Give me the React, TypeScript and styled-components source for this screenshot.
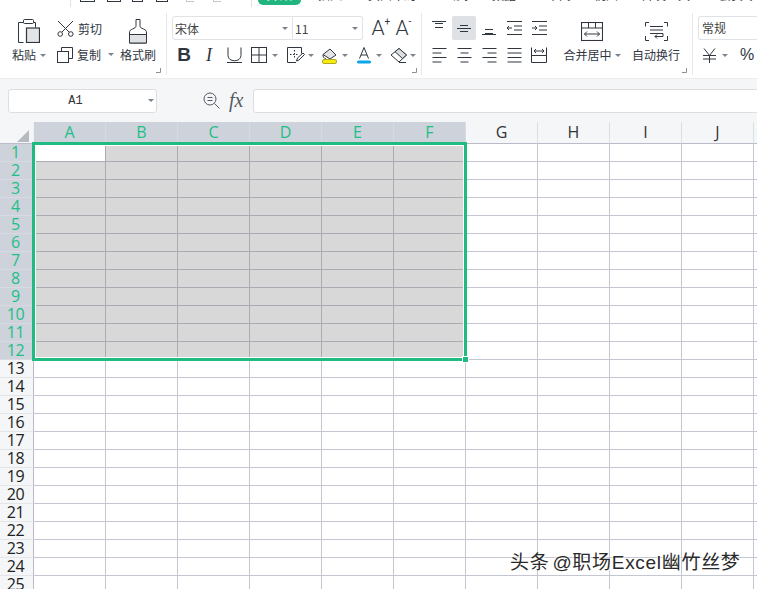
import React from "react";
import styled, { createGlobalStyle } from "styled-components";

const Global = createGlobalStyle`
  html, body { margin: 0; padding: 0; background: #fff; }
  * { box-sizing: border-box; }
`;

const CJK = `"Noto Sans CJK SC", "Noto Sans", sans-serif`;
const INK = "#30363f";

const Page = styled.div`
  width: 757px; height: 589px; overflow: hidden; position: relative; background: #fff;
  font-family: ${CJK}; color: ${INK};
`;

/* ---- clipped tab strip ---- */
const Strip = styled.div`
  height: 7px; display: flex; overflow: hidden; position: relative; background: #fff;
`;
const StripSep = styled.div<{ $ml: number }>`
  width: 1px; height: 7px; background: #dfe1e5; margin-left: ${p => p.$ml}px; flex: none;
`;
const QuickIcon = styled.div<{ $ml: number; $w: number }>`
  flex: none; width: ${p => p.$w}px; height: 2px; margin-left: ${p => p.$ml}px;
  border: 1px solid ${INK}; border-top: none;
`;
const QuickFaint = styled(QuickIcon)`
  border-color: #c5c7cb; border-width: 0 0 1px 1px;
`;
const Pill = styled.div`
  flex: none; margin-left: 6px; width: 43px; height: 5px; background: #20b57f;
  border-radius: 0 0 12px 12px; overflow: hidden; color: #fff; font-size: 13px;
  line-height: 18px; text-align: center;
  span { display: block; margin-top: -15px; }
`;
const TabText = styled.div<{ $ml: number }>`
  flex: none; margin-left: ${p => p.$ml}px; font-size: 12px; line-height: 16px;
  margin-top: -13px; color: #333; white-space: nowrap;
`;

/* ---- ribbon ---- */
const Ribbon = styled.div`
  height: 71px; display: flex; background: #fff; position: relative;
`;
const Group = styled.div<{ $w: number; $pl?: number }>`
  flex: none; width: ${p => p.$w}px; padding-left: ${p => p.$pl ?? 0}px; height: 100%;
  position: relative; display: flex;
`;
const GroupLine = styled.div`
  flex: none; width: 1px; height: 62px; margin-top: 6px; background: #e6e7ea;
`;
const Corner = styled.svg<{ $r: number }>`
  position: absolute; right: ${p => p.$r}px; bottom: 5px; width: 5px; height: 5px;
`;
const Arrow = styled.i<{ $ml?: number }>`
  display: inline-block; flex: none; width: 0; height: 0; margin-left: ${p => p.$ml ?? 3}px;
  border-left: 3px solid transparent; border-right: 3px solid transparent; border-top: 3px solid #7d828c;
`;
const BigTool = styled.div<{ $w: number; $ml?: number }>`
  flex: none; width: ${p => p.$w}px; margin-left: ${p => p.$ml ?? 0}px; display: flex; flex-direction: column;
  align-items: center;
`;
const BigIcon = styled.div<{ $pt?: number }>`
  height: 36px; padding-top: ${p => p.$pt ?? 12}px; display: flex; justify-content: center; align-items: flex-start;
`;
const Label = styled.div`
  margin-top: 3px; height: 18px; display: flex; align-items: center; font-size: 12px; line-height: 18px;
  white-space: nowrap; color: ${INK};
`;
const SmallStack = styled.div<{ $ml: number }>`
  flex: none; margin-left: ${p => p.$ml}px; display: flex; flex-direction: column; padding-top: 13px; gap: 9px;
`;
const SmallTool = styled.div`
  display: flex; align-items: center; gap: 4px; height: 17px; font-size: 12px; white-space: nowrap;
`;
const FontColumn = styled.div`
  flex: none; display: flex; flex-direction: column; padding-top: 9px;
`;
const Row = styled.div<{ $mt?: number }>`
  display: flex; align-items: center; margin-top: ${p => p.$mt ?? 0}px;
`;
const Combo = styled.div<{ $w: number }>`
  flex: none; width: ${p => p.$w}px; height: 24px; border: 1px solid #e0e2e6; display: flex; align-items: center;
  justify-content: space-between; padding: 0 4px 0 2px; font-size: 12px; background: #fff; color: #444;
  &:first-child { border-radius: 3px 0 0 3px; }
  & + & { border-left: none; border-radius: 0 3px 3px 0; }
`;
const Slot = styled.div<{ $w: number; $ml?: number }>`
  flex: none; width: ${p => p.$w}px; margin-left: ${p => p.$ml ?? 0}px; height: 24px; display: flex;
  align-items: center; justify-content: center;
`;
const IconDrop = styled.div<{ $ml: number }>`
  flex: none; margin-left: ${p => p.$ml}px; height: 24px; display: flex; align-items: center;
`;
const BoldB = styled.span`
  font: 700 19px "Liberation Sans", sans-serif; color: ${INK};
`;
const ItalicI = styled.span`
  font: italic 400 18px "Liberation Serif", serif; color: ${INK};
`;
const GrowA = styled.span`
  font: 300 21px Roboto, sans-serif; color: ${INK}; position: relative;
  sup { position: absolute; left: 100%; top: 1px; font-size: 10px; line-height: 10px; font-weight: 400; }
`;
const AlignCell = styled.div<{ $on?: boolean }>`
  flex: none; width: 24px; height: 24px; margin-right: 1px; border-radius: 2px; display: flex; align-items: center;
  justify-content: center; background: ${p => (p.$on ? "#dee1e5" : "transparent")};
`;
const NumBox = styled.div`
  width: 70px; height: 24px; border: 1px solid #e0e2e6; border-radius: 3px 0 0 3px; border-right: none;
  font-size: 12px; line-height: 22px; padding-left: 3px; color: #444;
`;
const Percent = styled.span`
  font: 400 16px "Liberation Sans", sans-serif; color: ${INK}; margin-left: 10px;
`;

/* ---- formula bar ---- */
const FormulaBar = styled.div`
  height: 44px; background: #f5f6f8; display: flex; align-items: center; padding: 0 0 0 8px;
  border-top: 1px solid #eceded;
`;
const NameBox = styled.div`
  flex: none; width: 149px; height: 24px; background: #fff; border: 1px solid #dcdee2; border-radius: 3px;
  display: flex; align-items: center; padding-right: 2px;
  span { flex: 1; text-align: center; font: 400 12px "Liberation Mono", monospace; color: #333; padding-right: 3px; }
`;
const Fx = styled.span`
  font: italic 400 20px "Liberation Serif", serif; color: #555a66; margin-left: 9px; width: 19px; flex: none;
`;
const FormulaInput = styled.div`
  flex: none; margin-left: 5px; width: 520px; height: 24px; background: #fff; border: 1px solid #dcdee2; border-radius: 3px 0 0 3px;
`;

/* ---- sheet ---- */
const Sheet = styled.div`
  position: relative; width: 900px;
`;
const HeaderRow = styled.div`
  height: 22px; display: flex;
`;
const Corners = styled.div`
  flex: none; width: 34px; height: 22px; background: #f5f6f8; border-right: 1px solid #eff0f3; border-bottom: 1px solid #b9bcc8;
  display: flex; justify-content: flex-end; align-items: flex-end; padding: 0 4px 1px 0;
`;
const ColHead = styled.div<{ $sel: boolean }>`
  flex: none; width: 72px; height: 22px; text-align: center; font: 400 16px/20px "Open Sans", sans-serif;
  background: ${p => (p.$sel ? "#cdd2db" : "#f5f6f8")}; color: ${p => (p.$sel ? "#1dbf88" : "#333")};
  border-right: 1px solid ${p => (p.$sel ? "#d6dae2" : "#dcdee5")};
  border-bottom: 1px solid ${p => (p.$sel ? "#cdd2db" : "#b9bcc8")};
`;
const GridRow = styled.div`
  height: 18px; display: flex;
`;
const RowHead = styled.div<{ $sel: boolean }>`
  flex: none; width: 34px; height: 18px; padding-right: 2px; text-align: center; font: 400 16px/16px "Open Sans", sans-serif;
  letter-spacing: -0.3px;
  background: ${p => (p.$sel ? "#cdd2db" : "#f5f6f8")}; color: ${p => (p.$sel ? "#1dbf88" : "#222")};
  border-right: 1px solid ${p => (p.$sel ? "#cdd2db" : "#b9bcc8")};
  border-bottom: 1px solid ${p => (p.$sel ? "#d6dae2" : "#e3e5ea")};
`;
const Cell = styled.div<{ $mode: "plain" | "sel" | "active" }>`
  flex: none; width: 72px; height: 18px;
  background: ${p => (p.$mode === "sel" ? "#d8d8d8" : "#fff")};
  border-right: 1px solid ${p => (p.$mode === "plain" ? "#c4c7d2" : "#a9acb3")};
  border-bottom: 1px solid ${p => (p.$mode === "plain" ? "#c4c7d2" : "#a9acb3")};
`;
const Selection = styled.div`
  position: absolute; left: 32px; top: 20px; width: 435px; height: 219px;
  border: 3px solid #1fbb80; box-shadow: inset 0 0 0 1px #fff; pointer-events: none;
`;
const Handle = styled.div`
  position: absolute; left: 463px; top: 235px; width: 5px; height: 5px; background: #1fbb80;
  box-shadow: 0 0 0 1px #fff;
`;
const Watermark = styled.div`
  position: absolute; left: 510px; top: 550px; font-family: "Liberation Sans", ${CJK}; font-size: 19px; line-height: 26px;
  letter-spacing: 0.7px; word-spacing: -3px; color: #2a2a2a;
  white-space: nowrap; text-shadow: 1px 1px 1px rgba(255,255,255,.9), -1px -1px 1px rgba(255,255,255,.7);
`;

/* ---- icons ---- */
const S: React.FC<{ w: number; h: number; children: React.ReactNode }> = ({ w, h, children }) => (
  <svg width={w} height={h} viewBox={`0 0 ${w} ${h}`} fill="none" stroke={INK} strokeWidth={1} style={{ display: "block", flex: "none" }}>
    {children}
  </svg>
);
const PasteIcon = () => (
  <S w={22} h={24}>
    <path d="M5.5 23.5H.5V3.5h5M15.5 3.5h2v5" />
    <rect x="5.5" y=".5" width="10" height="4" rx="1" fill="#fff" />
    <rect x="8.5" y="9" width="13" height="14.5" fill="#e3e4e6" strokeWidth={1.2} />
  </S>
);
const CutIcon = () => (
  <S w={17} h={17}>
    <path d="M1 1l11 11M16 1L5 12" />
    <circle cx="3.2" cy="14" r="2.3" /><circle cx="13.8" cy="14" r="2.3" />
  </S>
);
const CopyIcon = () => (
  <S w={16} h={16}>
    <path d="M4.5 4V.5h11v11H12" />
    <rect x=".5" y="4.5" width="11" height="11" />
  </S>
);
const BrushIcon = () => (
  <S w={18} h={25}>
    <path d="M7 .5h4v6c0 2 1 2.500 3.500 3.500 2 .8 3 1.500 3 4v10H.5v-10c0-2.500 1-3.200 3-4C6 9 7 8.500 7 6.500z" />
    <path d="M.5 15.500h17v8.500H.5z" fill="#e0e1e4" />
  </S>
);
const BorderIcon = () => (
  <S w={16} h={16}><rect x=".5" y=".5" width="15" height="15" /><path d="M8 .5v15M.5 8h15" /></S>
);
const DashBorderIcon = () => (
  <S w={18} h={16}>
    <path d="M9 15.500H.5V.5h14v6" />
    <path d="M7.500 3v9M3 7.500h9" strokeDasharray="1.500 1.500" />
    <path d="M9.500 14l1-3 5.500-5 1.500 1.500-5.500 5.500z" />
  </S>
);
const FillIcon = () => (
  <svg width="16" height="17" viewBox="0 0 16 17" fill="none" stroke={INK} style={{ display: "block", flex: "none" }}>
    <path d="M1 7.500L8 2l6 6-6 4z" fill="#e4e5e7" />
    <path d="M1 7.500c-.5 2 1 4 3 4.500" />
    <rect x=".5" y="12.500" width="14" height="4" rx="1.500" fill="#f6ec10" stroke="#b0a820" />
  </svg>
);
const FontColorIcon = () => (
  <svg width="14" height="18" viewBox="0 0 14 18" fill="none" style={{ display: "block", flex: "none" }}>
    <path d="M2.500 12.500L7 1.500l4.500 11M4 9h6" stroke={INK} />
    <rect x="0" y="14.500" width="14" height="3" rx="1.500" fill="#0ba5e8" />
  </svg>
);
const EraserIcon = () => (
  <S w={18} h={15}>
    <path d="M1 7l8-6.500 7.500 6.500L9 14z" />
    <path d="M5 3.700L12.500 10.500L16.500 7L9 .5z" fill="#dcdde0" />
    <path d="M9 14.500h7" />
  </S>
);
type AL = "top" | "mid" | "bot";
const VAlign: React.FC<{ v: AL }> = ({ v }) => {
  const y = v === "top" ? [2, 6] : v === "mid" ? [5, 9] : [8, 12];
  return (
    <S w={16} h={14}>
      {v === "top" && <path d="M1 .5h14" />}
      {v === "bot" && <path d="M1 13.500h14" />}
      {v === "mid" && <path d="M1 7.500h14" />}
      <path d={`M4 ${y[0] + .5 - (v === "mid" ? 1 : 0)}h8`} />
      <path d={`M4 ${y[1] + .5 + (v === "mid" ? 1 : 0)}h8`} />
    </S>
  );
};
const Indent: React.FC<{ out?: boolean }> = ({ out }) => (
  <S w={16} h={14}>
    <path d="M1 .5h15M1 13.500h15M8 5h8M8 9h8" />
    {out ? <path d="M6 7H1M3 5L1 7l2 2" /> : <path d="M1 7h5M4 5l2 2-2 2" />}
  </S>
);
const HAlign: React.FC<{ k: "l" | "c" | "r" | "j" }> = ({ k }) => {
  const d = k === "l" ? "M.5 1.500h14M.5 6h9M.5 10.500h14M.5 15h9" : undefined;
  const e = k === "c" ? "M.5 1.500h14M3.500 6h8M.5 10.500h14M3.500 15h8" : undefined;
  const f = k === "r" ? "M.5 1.500h14M5.500 6h9M.5 10.500h14M5.500 15h9" : undefined;
  const g = k === "j" ? "M.5 1.500h14M.5 6h14M.5 10.500h14M.5 15h14" : undefined;
  return <S w={15} h={16}><path d={d ?? e ?? f ?? g} strokeWidth={1.1} /></S>;
};
const Distribute = () => (
  <S w={16} h={16}>
    <path d="M.5 .5v15M15.500 .5v15M.5 15.500h15M.5 8.500h15" />
    <path d="M3 4h10M5 2L3 4l2 2M11 2l2 2-2 2" />
  </S>
);
const MergeIcon = () => (
  <S w={22} h={19}>
    <rect x=".5" y=".5" width="21" height="18" strokeWidth={1.1} />
    <path d="M.5 6h21M7.500 .5V6M14.500 .5V6" />
    <path d="M3.500 12h15M6 9.500L3.500 12 6 14.500M16 9.500l2.500 2.500-2.500 2.500" />
  </S>
);
const WrapIcon = () => (
  <S w={23} h={19}>
    <path d="M4 .5H.5v4M19 .5h3.500v4M.5 14v4.500H4M22.500 14v4.500H19" />
    <path d="M5 4.500h13M5 8h13M5 11.500h13v3h-8M12 12.500l-2 2 2 2" />
  </S>
);
const ZoomIcon = () => (
  <svg width="17" height="17" viewBox="0 0 17 17" fill="none" stroke="#555a66" style={{ display: "block", flex: "none" }}>
    <circle cx="7" cy="7" r="6" /><path d="M11.500 11.500l5 5M4.500 5.500h5M4.500 8.500h5" />
  </svg>
);
const CornerMark = ({ r }: { r: number }) => (
  <Corner $r={r} viewBox="0 0 5 5" fill="none" stroke="#8c9099"><path d="M4.500 0v4.500H0" /></Corner>
);

const cols = ["A", "B", "C", "D", "E", "F", "G", "H", "I", "J", ""];
const rows = Array.from({ length: 25 }, (_, i) => i + 1);

export default function App() {
  return (
    <Page>
      <Global />
      <Strip>
        <StripSep $ml={70} />
        <QuickIcon $ml={9} $w={15} />
        <QuickIcon $ml={12} $w={14} />
        <QuickIcon $ml={11} $w={11} />
        <QuickIcon $ml={13} $w={12} />
        <QuickFaint $ml={18} $w={8} />
        <QuickFaint $ml={19} $w={8} />
        <StripSep $ml={30} />
        <Pill><span>开始</span></Pill>
        <TabText $ml={17}>插入</TabText>
        <TabText $ml={26}>页面布局</TabText>
        <TabText $ml={28}>公式</TabText>
        <TabText $ml={24}>数据</TabText>
        <TabText $ml={31}>审阅</TabText>
        <TabText $ml={23}>视图</TabText>
        <TabText $ml={24}>开发工具</TabText>
        <TabText $ml={29}>会员专享</TabText>
      </Strip>
      <Ribbon>
        <Group $w={166}>
          <BigTool $w={34} $ml={12}>
            <BigIcon><PasteIcon /></BigIcon>
            <Label>粘贴<Arrow $ml={4} /></Label>
          </BigTool>
          <SmallStack $ml={11}>
            <SmallTool><CutIcon />剪切</SmallTool>
            <SmallTool><CopyIcon />复制<Arrow /></SmallTool>
          </SmallStack>
          <BigTool $w={40} $ml={4}>
            <BigIcon><BrushIcon /></BigIcon>
            <Label>格式刷</Label>
          </BigTool>
          <CornerMark r={5} />
        </Group>
        <GroupLine />
        <Group $w={254} $pl={5}>
          <FontColumn>
            <Row>
              <Combo $w={121}>宋体<Arrow /></Combo>
              <Combo $w={70}>11<Arrow /></Combo>
              <Slot $w={24} $ml={3}><GrowA>A<sup>+</sup></GrowA></Slot>
              <Slot $w={24}><GrowA>A<sup>-</sup></GrowA></Slot>
            </Row>
            <Row $mt={3}>
              <Slot $w={24}><BoldB>B</BoldB></Slot>
              <Slot $w={24} $ml={1}><ItalicI>I</ItalicI></Slot>
              <Slot $w={24} $ml={1}>
                <S w={15} h={16}><path d="M1 .5v8c0 7 13 7 13 0v-8M0 15.500h15" /></S>
              </Slot>
              <IconDrop $ml={5}><BorderIcon /><Arrow $ml={5} /></IconDrop>
              <IconDrop $ml={9}><DashBorderIcon /><Arrow $ml={3} /></IconDrop>
              <IconDrop $ml={8}><FillIcon /><Arrow $ml={4} /></IconDrop>
              <IconDrop $ml={9}><FontColorIcon /><Arrow $ml={5} /></IconDrop>
              <IconDrop $ml={8}><EraserIcon /><Arrow $ml={2} /></IconDrop>
            </Row>
          </FontColumn>
          <CornerMark r={4} />
        </Group>
        <GroupLine />
        <Group $w={270} $pl={5}>
          <FontColumn>
            <Row>
              <AlignCell><VAlign v="top" /></AlignCell>
              <AlignCell $on><VAlign v="mid" /></AlignCell>
              <AlignCell><VAlign v="bot" /></AlignCell>
              <AlignCell><Indent out /></AlignCell>
              <AlignCell><Indent /></AlignCell>
            </Row>
            <Row $mt={3}>
              <AlignCell><HAlign k="l" /></AlignCell>
              <AlignCell><HAlign k="c" /></AlignCell>
              <AlignCell><HAlign k="r" /></AlignCell>
              <AlignCell><HAlign k="j" /></AlignCell>
              <AlignCell><Distribute /></AlignCell>
            </Row>
          </FontColumn>
          <BigTool $w={64} $ml={8}>
            <BigIcon $pt={15}><MergeIcon /></BigIcon>
            <Label>合并居中<Arrow /></Label>
          </BigTool>
          <BigTool $w={52} $ml={6}>
            <BigIcon $pt={15}><WrapIcon /></BigIcon>
            <Label>自动换行</Label>
          </BigTool>
          <CornerMark r={5} />
        </Group>
        <GroupLine />
        <Group $w={70} $pl={5}>
          <FontColumn>
            <NumBox>常规</NumBox>
            <Row $mt={3}>
              <Slot $w={30} $ml={2}>
                <S w={15} h={15}><path d="M2 .5l5.500 7 5.500-7M1 7.500h13M1 11h13M7.500 7.500v7.500" /></S>
                <Arrow $ml={5} />
              </Slot>
              <Percent>%</Percent>
            </Row>
          </FontColumn>
        </Group>
      </Ribbon>
      <FormulaBar>
        <NameBox>
          <span>A1</span>
          <Arrow />
        </NameBox>
        <Slot $w={17} $ml={46}><ZoomIcon /></Slot>
        <Fx>fx</Fx>
        <FormulaInput />
      </FormulaBar>
      <Sheet>
        <HeaderRow>
          <Corners>
            <svg width="12" height="12" viewBox="0 0 12 12" style={{ display: "block" }}><path d="M12 0v12H0z" fill="#b7babf" /></svg>
          </Corners>
          {cols.map((c, i) => <ColHead key={i} $sel={i < 6}>{c}</ColHead>)}
        </HeaderRow>
        {rows.map(r => (
          <GridRow key={r}>
            <RowHead $sel={r <= 12}>{r}</RowHead>
            {cols.map((_, i) => (
              <Cell
                key={i}
                $mode={r <= 12 && i < 6 ? (r === 1 && i === 0 ? "active" : "sel") : "plain"}
              />
            ))}
          </GridRow>
        ))}
        <Selection />
        <Handle />
      </Sheet>
      <Watermark>头条 @职场Excel幽竹丝梦</Watermark>
    </Page>
  );
}
